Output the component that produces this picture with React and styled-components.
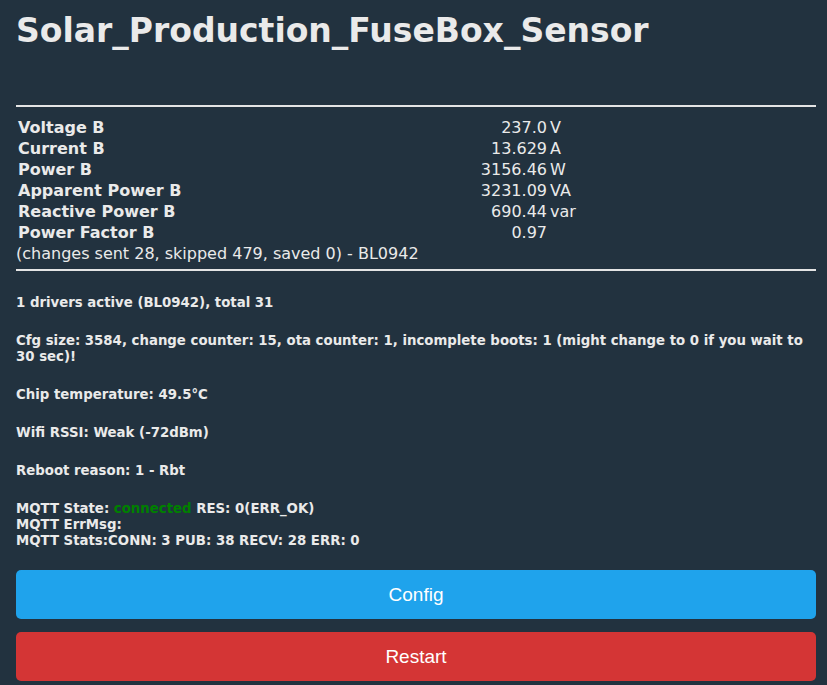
import React from "react"
import styled, { createGlobalStyle } from "styled-components"

const GlobalStyle = createGlobalStyle`
    html, body {
        margin: 0;
        padding: 0;
        background: #22323f;
    }
    body {
        color: #eaeaea;
        font-family: "DejaVu Sans", Verdana, sans-serif;
    }
`

const Page = styled.div`
    padding: 12px 11px 0 16px;
    display: flex;
    flex-direction: column;
`

const Title = styled.h1`
    margin: 0;
    font-size: 33px;
    font-weight: bold;
    line-height: 38px;
    height: 93px;
`

const Rule = styled.hr`
    border: none;
    border-top: 2px solid #e4e4e4;
    margin: 0;
`

const Readings = styled.div`
    display: grid;
    grid-template-columns: 420px 109px 60px;
    padding: 10px 0 0 2px;
    font-size: 16px;
    line-height: 21px;
`

const Label = styled.div`
    font-weight: bold;
`

const Value = styled.div`
    text-align: right;
`

const Unit = styled.div`
    padding-left: 3px;
`

const Footnote = styled.div`
    font-size: 16px;
    line-height: 21px;
    padding-bottom: 5px;
`

const Info = styled.div`
    display: flex;
    flex-direction: column;
    gap: 22px;
    padding-top: 24px;
    font-size: 13.3px;
    font-weight: bold;
    line-height: 16px;
`

const Block = styled.div``

const Ok = styled.span`
    color: #008000;
`

const Buttons = styled.div`
    display: flex;
    flex-direction: column;
    gap: 13px;
    margin-top: 21px;
`

const Button = styled.button`
    height: 49px;
    border: none;
    border-radius: 5px;
    background: ${p => p.$tone === "red" ? "#d43535" : "#1fa3ec"};
    color: #fff;
    font-family: "Liberation Sans", Arial, sans-serif;
    font-size: 19px;
    cursor: pointer;
`

const rows = [
    ["Voltage B", "237.0", "V"],
    ["Current B", "13.629", "A"],
    ["Power B", "3156.46", "W"],
    ["Apparent Power B", "3231.09", "VA"],
    ["Reactive Power B", "690.44", "var"],
    ["Power Factor B", "0.97", ""],
]

const App = () => {
    return (
        <Page>
            <GlobalStyle />
            <Title>Solar_Production_FuseBox_Sensor</Title>
            <Rule />
            <Readings>
                {rows.map(([label, value, unit]) => (
                    <React.Fragment key={label}>
                        <Label>{label}</Label>
                        <Value>{value}</Value>
                        <Unit>{unit}</Unit>
                    </React.Fragment>
                ))}
            </Readings>
            <Footnote>(changes sent 28, skipped 479, saved 0) - BL0942</Footnote>
            <Rule />
            <Info>
                <Block>1 drivers active (BL0942), total 31</Block>
                <Block>Cfg size: 3584, change counter: 15, ota counter: 1, incomplete boots: 1 (might change to 0 if you wait to 30 sec)!</Block>
                <Block>Chip temperature: 49.5°C</Block>
                <Block>Wifi RSSI: Weak (-72dBm)</Block>
                <Block>Reboot reason: 1 - Rbt</Block>
                <Block>
                    MQTT State: <Ok>connected</Ok> RES: 0(ERR_OK)<br />
                    MQTT ErrMsg: <br />
                    MQTT Stats:CONN: 3 PUB: 38 RECV: 28 ERR: 0
                </Block>
            </Info>
            <Buttons>
                <Button>Config</Button>
                <Button $tone="red">Restart</Button>
            </Buttons>
        </Page>
    )
}

export default App
